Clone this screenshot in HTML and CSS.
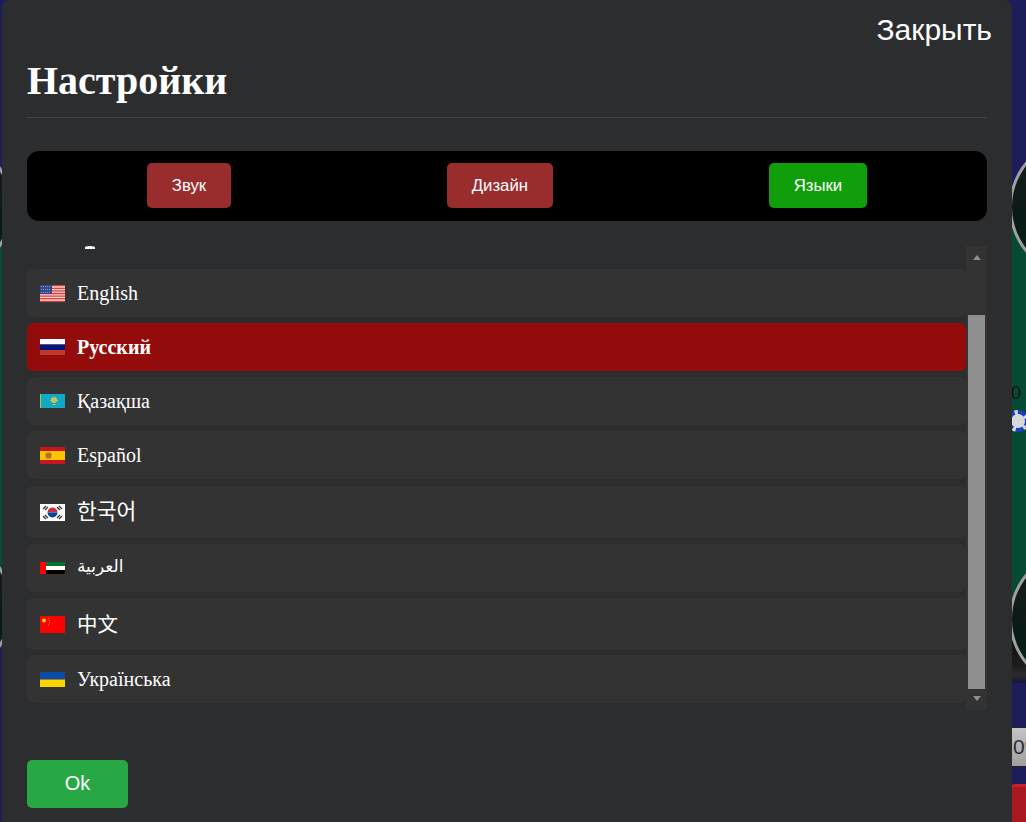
FILE: index.html
```html
<!DOCTYPE html>
<html lang="ru">
<head>
    <meta charset="UTF-8">
    <title>Настройки</title>
    <link rel="stylesheet" href="styles.css">
</head>
<body>

    <div class="table">
        <div class="felt felt-left"></div>
        <div class="felt felt-right"></div>
        <div class="seat-base"></div>
        <div class="seat seat-top"></div>
        <div class="seat seat-bottom"></div>
        <div class="seat seat-left-top"></div>
        <div class="seat seat-left-bottom"></div>
        <span class="pot">0</span>
        <div class="chip"></div>
        <div class="bet-input">0%</div>
        <div class="red-btn"></div>
    </div>

    <div class="modal">
        <div class="modal-top">
            <a class="close">Закрыть</a>
        </div>
        <h2 class="title">Настройки</h2>
        <hr class="line">

        <div class="tabs">
            <button class="tab">Звук</button>
            <button class="tab">Дизайн</button>
            <button class="tab tab-active">Языки</button>
        </div>

        <div class="scroll-box">
            <div class="lang-list">
                <div class="clipped"><span class="clipped-tip"></span></div>

                <div class="lang">
                    <svg class="flag" width="25" height="17" viewBox="0 0 25 17">
                        <rect width="25" height="17" fill="#f7d5d2"/>
                        <path d="M0 .7h25M0 3.3h25M0 5.9h25M0 8.5h25M0 11.1h25M0 13.7h25M0 16.3h25" stroke="#dc3f3a" stroke-width="1.3"/>
                        <rect width="12" height="9" fill="#34478f"/>
                        <path d="M1 1.5h10M1 4.5h10M1 7.5h10" stroke="#8a97c4" stroke-width="1" stroke-dasharray="1 1"/>
                    </svg>
                    <span>English</span>
                </div>

                <div class="lang lang-active">
                    <svg class="flag" width="25" height="16" viewBox="0 0 25 16">
                        <rect width="25" height="5.5" fill="#fff"/>
                        <rect y="5.5" width="25" height="5.5" fill="#00167e"/>
                        <rect y="11" width="25" height="5" fill="#c0392b"/>
                    </svg>
                    <span>Русский</span>
                </div>

                <div class="lang">
                    <svg class="flag" width="25" height="14" viewBox="0 0 25 14">
                        <rect width="25" height="14" fill="#10aac6"/>
                        <rect width="1" height="14" fill="#b3c24a"/>
                        <circle cx="14" cy="6" r="3" fill="#d9c24a"/>
                        <path d="M10 6.5h8M12.5 10.5h3" stroke="#c7bd55" stroke-width="1"/>
                    </svg>
                    <span>Қазақша</span>
                </div>

                <div class="lang">
                    <svg class="flag" width="25" height="17" viewBox="0 0 25 17">
                        <rect width="25" height="17" fill="#c9151e"/>
                        <rect y="4" width="25" height="9" fill="#fcc400"/>
                        <rect x="5.5" y="5.5" width="6" height="6" rx="2" fill="#b0702e"/>
                    </svg>
                    <span>Español</span>
                </div>

                <div class="lang lang-tall lang-ko">
                    <svg class="flag" width="25" height="17" viewBox="0 0 25 17">
                        <rect width="25" height="17" fill="#fff"/>
                        <path d="M7.5 8.5a5 5 0 0 1 10 0z" fill="#cd2e3a"/>
                        <path d="M7.5 8.5a5 5 0 0 0 10 0z" fill="#0047a0"/>
                        <path d="M3 5l3-3M5 6l3-3M17 3l3 3M19 2l3 3M3 12l3 3M5 11l3 3M17 14l3-3M19 15l3-3" stroke="#333" stroke-width="1.3"/>
                    </svg>
                    <span class="korean">한국어</span>
                </div>

                <div class="lang">
                    <svg class="flag" width="25" height="12" viewBox="0 0 25 12">
                        <rect width="25" height="4" fill="#00732f"/>
                        <rect y="4" width="25" height="4" fill="#fff"/>
                        <rect y="8" width="25" height="4" fill="#000"/>
                        <rect width="6" height="12" fill="#f00"/>
                    </svg>
                    <span class="arabic">العربية</span>
                </div>

                <div class="lang lang-tall">
                    <svg class="flag" width="25" height="17" viewBox="0 0 25 17">
                        <rect width="25" height="17" fill="#f00"/>
                        <circle cx="4" cy="4.5" r="2" fill="#f7d000"/>
                        <path d="M8.5 2v1M9.5 4v1M9.5 6.5v1M8.5 8.500v1" stroke="#e8a000" stroke-width="1"/>
                    </svg>
                    <span class="chinese">中文</span>
                </div>

                <div class="lang lang-uk">
                    <svg class="flag" width="25" height="15" viewBox="0 0 25 15">
                        <rect width="25" height="7.5" fill="#0a4ca8"/>
                        <rect y="7.5" width="25" height="7.5" fill="#ffd500"/>
                    </svg>
                    <span>Українська</span>
                </div>
            </div>

            <div class="scrollbar">
                <div class="arrow arrow-up"></div>
                <div class="track"><div class="thumb"></div></div>
                <div class="arrow arrow-down"></div>
            </div>
        </div>

        <button class="ok">Ok</button>
    </div>

</body>
</html>
```

FILE: styles.css
```css
body {
    margin: 0;
    height: 822px;
    overflow: hidden;
    position: relative;
    background-color: #1d1d5c;
    font-family: "Liberation Serif", serif;
}

.table {
    position: absolute;
    top: 0;
    left: 0;
    width: 1026px;
    height: 822px;
    overflow: hidden;
}

.felt {
    position: absolute;
    background-color: #054a32;
}

.felt-left {
    top: 207px;
    left: 0;
    width: 30px;
    height: 400px;
}

.felt-right {
    top: 207px;
    left: 1000px;
    width: 40px;
    height: 420px;
}

.seat-base {
    position: absolute;
    top: 625px;
    left: 1000px;
    width: 40px;
    height: 58px;
    background: linear-gradient(#0c0c0c, #1c1c1c 70%, #2b2b2b 85%, #16163a);
}

.seat {
    position: absolute;
    box-sizing: border-box;
    width: 140px;
    height: 140px;
    border: 3px solid #a0a0a0;
    border-top-color: #5c5c5c;
    border-radius: 50%;
    background: linear-gradient(#1c1c1c, #0a1a16 60%, #06281e);
}

.seat-top {
    top: 137px;
    left: 1009px;
}

.seat-bottom {
    top: 549px;
    left: 1009px;
}

.seat-left-top {
    top: 137px;
    left: -127px;
}

.seat-left-bottom {
    top: 537px;
    left: -127px;
}

.pot {
    position: absolute;
    left: 1011px;
    top: 383px;
    font-family: "Liberation Sans", sans-serif;
    font-size: 18px;
    color: #111;
}

.chip {
    position: absolute;
    box-sizing: border-box;
    left: 1007px;
    top: 410px;
    width: 22px;
    height: 22px;
    border: 4px dashed #1a3fc4;
    border-radius: 50%;
    background-color: #d8d8d8;
}

.bet-input {
    position: absolute;
    left: 1012px;
    top: 727px;
    width: 30px;
    height: 40px;
    padding-left: 1px;
    line-height: 38px;
    border-top: 1px solid #222;
    border-bottom: 1px solid #222;
    box-sizing: border-box;
    background: linear-gradient(#c4c4c4, #a0a0a0);
    font-family: "Liberation Sans", sans-serif;
    font-size: 21px;
    color: #2b2b3a;
}

.red-btn {
    position: absolute;
    box-sizing: border-box;
    left: 1009px;
    top: 784px;
    width: 40px;
    height: 50px;
    border: 3px solid #c8202a;
    border-radius: 6px;
    background-color: #a81a20;
}

.modal {
    position: relative;
    box-sizing: border-box;
    width: 1010px;
    height: 830px;
    margin-left: 2px;
    padding: 0 25px;
    border-radius: 8px;
    background-color: #2c2d2f;
    color: #fff;
}

.modal-top {
    height: 58px;
    display: flex;
    justify-content: flex-end;
    align-items: flex-end;
}

.close {
    margin-right: -5px;
    margin-bottom: 13px;
    font-family: "Liberation Sans", sans-serif;
    font-size: 30px;
    line-height: 31px;
}

.title {
    margin: 0;
    font-size: 40px;
    line-height: 46px;
    font-weight: 700;
}

.line {
    height: 1px;
    margin: 13px 0 33px;
    border: 0;
    background-color: #444548;
}

.tabs {
    box-sizing: border-box;
    height: 70px;
    padding: 12px;
    display: flex;
    justify-content: space-around;
    align-items: flex-start;
    border-radius: 12px;
    background-color: #000;
}

.tab {
    height: 45px;
    padding: 0 25px;
    border: 0;
    border-radius: 5px;
    background-color: #992d2d;
    color: #fff;
    font-family: "Liberation Sans", sans-serif;
    font-size: 16.8px;
}

.tab-active {
    background-color: #109e0a;
}

.scroll-box {
    display: flex;
    height: 464px;
    margin-top: 25px;
}

.lang-list {
    flex: 1;
    overflow: hidden;
    display: flex;
    flex-direction: column;
    gap: 6px;
}

.clipped {
    height: 17px;
    flex-shrink: 0;
}

.clipped-tip {
    display: block;
    width: 10px;
    height: 3px;
    margin-left: 58px;
    border-radius: 50% 50% 0 0;
    background-color: #fff;
}

.lang {
    box-sizing: border-box;
    flex-shrink: 0;
    height: 48px;
    padding-left: 13px;
    display: flex;
    align-items: center;
    gap: 12px;
    border-radius: 6px;
    background-color: #333;
    font-size: 20px;
}

.lang-tall {
    height: 52px;
}

.lang-ko {
    margin-top: 1px;
}

.lang-uk {
    margin-top: -1px;
}

.lang-active {
    background-color: #930b0b;
    font-weight: 700;
}

.korean {
    margin-top: -5px;
    font-family: "Noto Sans CJK KR", "Liberation Serif", serif;
    font-size: 21.5px;
}

.chinese {
    margin-top: -2px;
    font-family: "Noto Sans CJK SC", "Liberation Serif", serif;
    font-size: 20.5px;
}

.arabic {
    margin-top: -4px;
    font-family: "DejaVu Sans", serif;
    font-size: 17px;
}

.scrollbar {
    width: 21px;
    display: flex;
    flex-direction: column;
    background-color: #333;
}

.arrow {
    display: flex;
    align-items: center;
    justify-content: center;
}

.arrow-up {
    height: 23px;
}

.arrow-down {
    height: 19px;
    padding-bottom: 2px;
}

.arrow-up::before,
.arrow-down::before {
    content: "";
    border-left: 4px solid transparent;
    border-right: 4px solid transparent;
}

.arrow-up::before {
    border-bottom: 5px solid #8f8f8f;
}

.arrow-down::before {
    border-top: 5px solid #8f8f8f;
}

.track {
    flex: 1;
    padding: 46px 2px 0;
}

.thumb {
    height: 374px;
    background-color: #8f8f8f;
}

.ok {
    display: block;
    width: 101px;
    height: 48px;
    margin-top: 50px;
    padding-bottom: 3px;
    border: 0;
    border-radius: 5px;
    background-color: #28a745;
    color: #fff;
    font-family: "Liberation Sans", sans-serif;
    font-size: 20px;
}
```
